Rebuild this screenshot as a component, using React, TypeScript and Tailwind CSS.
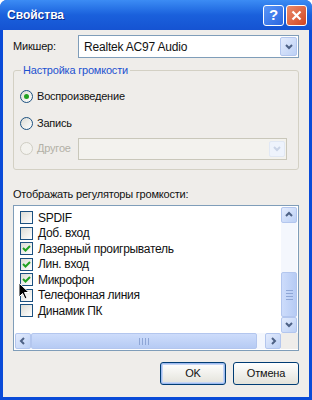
import React from "react";

const font = { fontFamily: '"Liberation Sans", "DejaVu Sans", sans-serif' };

function Arrow({ dir, disabled }: { dir: "up" | "down" | "left" | "right"; disabled?: boolean }) {
  const d =
    dir === "down" ? "M2 3 L5 6 L8 3" : dir === "up" ? "M2 6 L5 3 L8 6" : dir === "left" ? "M6 2 L3 5 L6 8" : "M4 2 L7 5 L4 8";
  return (
    <svg width="10" height="10" viewBox="0 0 10 10">
      <path d={d} fill="none" stroke={disabled ? "#c9d3e6" : "#4d6185"} strokeWidth="2" />
    </svg>
  );
}

function ScrollBtn({ dir, disabled }: { dir: "up" | "down" | "left" | "right"; disabled?: boolean }) {
  return (
    <div
      className={`w-[16px] h-[16px] shrink-0 rounded-[2px] border flex items-center justify-center ${
        disabled ? "border-[#e1e8f4] bg-[#eef3fc]" : "border-[#b3c6ee] bg-gradient-to-br from-[#e4ecfd] to-[#bcd0f5]"
      }`}
    >
      <Arrow dir={dir} disabled={disabled} />
    </div>
  );
}

function Radio({ checked, disabled }: { checked?: boolean; disabled?: boolean }) {
  return (
    <div
      className={`w-[13px] h-[13px] rounded-full border flex items-center justify-center shrink-0 ${
        disabled ? "border-[#cfcdc3] bg-[#f3f2ee]" : "border-[#1c5180] bg-gradient-to-br from-[#dcdcd5] to-white"
      }`}
    >
      {checked && <div className="w-[5px] h-[5px] rounded-full bg-[#21a121]" />}
    </div>
  );
}

function Check({ checked }: { checked?: boolean }) {
  return (
    <div className="w-[13px] h-[13px] border border-[#1c5180] bg-gradient-to-br from-[#dcdcd5] to-white flex items-center justify-center shrink-0">
      {checked && (
        <svg width="9" height="9" viewBox="0 0 9 9">
          <path d="M1 4 L3.5 6.5 L8 2" fill="none" stroke="#21a121" strokeWidth="2" />
        </svg>
      )}
    </div>
  );
}

const items: [string, boolean][] = [
  ["SPDIF", false],
  ["Доб. вход", false],
  ["Лазерный проигрыватель", true],
  ["Лин. вход", true],
  ["Микрофон", true],
  ["Телефонная линия", false],
  ["Динамик ПК", false],
];

export default function App() {
  return (
    <div
      className="w-[312px] h-[400px] bg-[#0a4bd8] rounded-t-[7px] flex flex-col text-[11px] tracking-[-0.2px] text-[#111] relative"
      style={font}
    >
      {/* title bar */}
      <div className="h-[30px] shrink-0 rounded-t-[7px] bg-gradient-to-b from-[#3c8cf4] via-[#1a60dc] to-[#1553d2] flex items-center pl-[7px] pr-[5px]">
        <span className="text-white font-bold text-[12px] tracking-[0px] [text-shadow:1px_1px_0_#0a2a8a] flex-1">
          Свойства
        </span>
        <div className="w-[21px] h-[21px] rounded-[3px] border border-white bg-gradient-to-br from-[#5a95f7] to-[#2a66e0] flex items-center justify-center text-white font-bold text-[15px] mr-[2px]">
          ?
        </div>
        <div className="w-[21px] h-[21px] rounded-[3px] border border-white bg-gradient-to-br from-[#ea8a6a] to-[#d2441e] flex items-center justify-center">
          <svg width="11" height="11" viewBox="0 0 11 11">
            <path d="M1.5 1.5 L9.5 9.5 M9.5 1.5 L1.5 9.5" stroke="white" strokeWidth="2.2" />
          </svg>
        </div>
      </div>
      {/* body */}
      <div className="flex-1 mx-[3px] mb-[3px] bg-[#efedea] flex flex-col px-[10px] pt-[5px]">
        <div className="flex items-center h-[23px]">
          <span className="w-[65px] shrink-0">Микшер:</span>
          <div className="flex-1 h-[23px] border border-[#7f9db9] bg-white flex items-center pl-[5px] pr-[1px]">
            <span className="flex-1 text-[12px]">Realtek AC97 Audio</span>
            <div className="w-[17px] h-[19px] rounded-[2px] border border-[#b3c6ee] bg-gradient-to-br from-[#e4ecfd] to-[#bcd0f5] flex items-center justify-center">
              <Arrow dir="down" />
            </div>
          </div>
        </div>

        <fieldset className="mt-[4px] border border-[#d3d0c4] rounded-[3px] h-[108px] px-[6px]">
          <legend className="px-[2px] ml-[1px] text-[#1d52d0]">Настройка громкости</legend>
          <div className="flex items-center gap-[4px] mt-[10px] h-[16px]">
            <Radio checked />
            <span>Воспроизведение</span>
          </div>
          <div className="flex items-center gap-[4px] mt-[11px] h-[16px]">
            <Radio />
            <span>Запись</span>
          </div>
          <div className="flex items-center mt-[6px] h-[22px]">
            <div className="flex items-center gap-[4px] w-[58px]">
              <Radio disabled />
              <span className="text-[#b2b0a6]">Другое</span>
            </div>
            <div className="flex-1 h-[22px] border border-[#c9c7ba] bg-[#f3f2ee] flex items-center justify-end pr-[1px]">
              <ScrollBtn dir="down" disabled />
            </div>
            <div className="w-[5px]" />
          </div>
        </fieldset>

        <div className="mt-[17px] h-[14px] leading-[14px]">Отображать регуляторы громкости:</div>

        <div className="mt-[4px] h-[146px] border border-[#7f9db9] bg-white flex flex-col">
          <div className="flex flex-1 min-h-0">
            <div className="flex-1 flex flex-col pt-[4px] pl-[6px]">
              {items.map(([t, c]) => (
                <div key={t} className="flex items-center gap-[5px] h-[15.5px]">
                  <Check checked={c} />
                  <span className="text-[12px] tracking-[-0.3px]">{t}</span>
                </div>
              ))}
            </div>
            <div className="w-[16px] mr-[1px] mt-[1px] flex flex-col bg-[#f4f7fd]">
              <ScrollBtn dir="up" />
              <div className="flex-1 flex flex-col justify-end">
                <div className="h-[45px] rounded-[2px] border border-[#b3c6ee] bg-gradient-to-r from-[#cddcfb] to-[#b6cbf4] flex flex-col items-center justify-center gap-[2px]">
                  <div className="w-[7px] h-[1px] bg-[#8ea6d6]" />
                  <div className="w-[7px] h-[1px] bg-[#8ea6d6]" />
                  <div className="w-[7px] h-[1px] bg-[#8ea6d6]" />
                  <div className="w-[7px] h-[1px] bg-[#8ea6d6]" />
                </div>
              </div>
              <ScrollBtn dir="down" />
            </div>
          </div>
          <div className="flex h-[17px] pb-[1px] pl-[1px]">
            <div className="flex-1 flex bg-[#f4f7fd]">
              <ScrollBtn dir="left" />
              <div className="flex-1 flex pr-[8px]">
                <div className="flex-1 rounded-[2px] border border-[#b3c6ee] bg-gradient-to-b from-[#cddcfb] to-[#b6cbf4] flex items-center justify-center gap-[2px]">
                  <div className="w-[1px] h-[7px] bg-[#8ea6d6]" />
                  <div className="w-[1px] h-[7px] bg-[#8ea6d6]" />
                  <div className="w-[1px] h-[7px] bg-[#8ea6d6]" />
                  <div className="w-[1px] h-[7px] bg-[#8ea6d6]" />
                </div>
              </div>
              <ScrollBtn dir="right" />
            </div>
            <div className="w-[17px] bg-[#efedea]" />
          </div>
        </div>

        <div className="flex justify-end gap-[7px] mt-[11px]">
          <button className="w-[66px] h-[23px] rounded-[3px] border border-[#003c74] bg-gradient-to-b from-white to-[#e3e2da] shadow-[inset_0_0_0_1px_#9ebbf0,inset_0_0_0_2px_#c5d5f5]">
            OK
          </button>
          <button className="w-[66px] h-[23px] rounded-[3px] border border-[#003c74] bg-gradient-to-b from-white to-[#e3e2da]">
            Отмена
          </button>
        </div>
      </div>
      {/* mouse cursor */}
      <svg className="absolute left-[18px] top-[282px]" width="12" height="19" viewBox="0 0 12 19">
        <path d="M1 1 L1 15 L4.5 11.5 L7 17 L9 16 L6.5 10.5 L11 10.5 Z" fill="black" stroke="white" strokeWidth="1" />
      </svg>
    </div>
  );
}
